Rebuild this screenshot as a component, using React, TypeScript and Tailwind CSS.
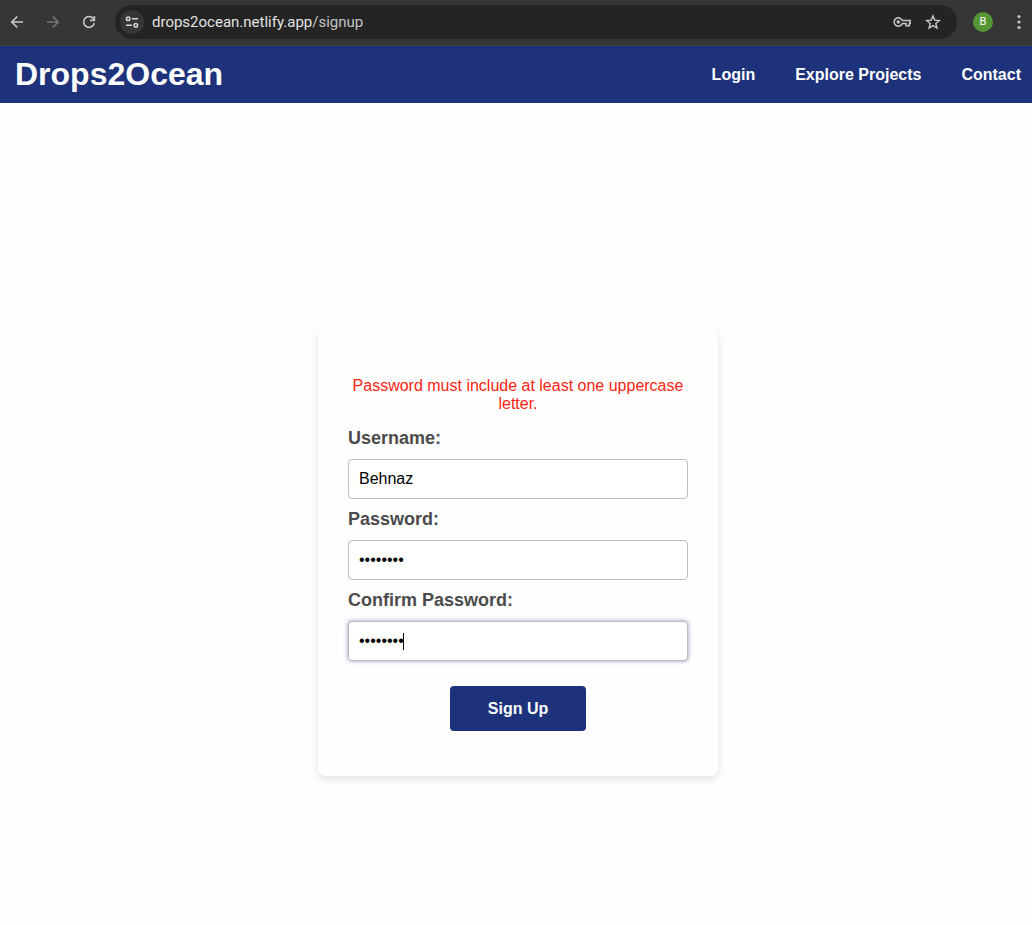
import React, { useState } from "react";

function BrowserBar() {
  return (
    <div className="flex h-[46px] items-center border-b border-[#434343] bg-[#363636] pb-px pl-[7px] pr-[5px] font-['Roboto',sans-serif]">
      <div className="flex flex-none items-center gap-4 text-[#c7c7c7]">
        <button type="button" aria-label="Back" className="flex size-5 items-center justify-center">
          <svg width="14" height="14" viewBox="0 0 14 14" fill="none" stroke="currentColor" strokeWidth="1.6">
            <path d="M13 7H2M7.2 1.6 1.8 7l5.4 5.4" />
          </svg>
        </button>
        <button type="button" aria-label="Forward" disabled className="flex size-5 items-center justify-center text-[#757575]">
          <svg width="14" height="14" viewBox="0 0 14 14" fill="none" stroke="currentColor" strokeWidth="1.6">
            <path d="M1 7h11M6.8 1.6 12.2 7l-5.4 5.4" />
          </svg>
        </button>
        <button type="button" aria-label="Reload" className="flex size-5 items-center justify-center">
          <svg width="14" height="14" viewBox="0 0 14 14" fill="none" stroke="currentColor" strokeWidth="1.6">
            <path d="M12.3 8.2A5.4 5.4 0 1 1 11.3 3.6L12.2 4.8M12.4 1v4.4H8" />
          </svg>
        </button>
      </div>
      <div className="ml-4 flex h-[34px] min-w-0 flex-1 items-center rounded-full bg-[#242424] pl-[5px] pr-4">
        <button type="button" aria-label="Site information" className="flex size-6 flex-none items-center justify-center rounded-full bg-[#363636] text-[#d6d6d6]">
          <svg width="14" height="14" viewBox="0 0 14 14" fill="none" stroke="currentColor" strokeWidth="1.5">
            <circle cx="3.2" cy="3.7" r="1.8" />
            <path d="M7 3.7h6M1 10.3h6" />
            <circle cx="10.8" cy="10.3" r="1.8" />
          </svg>
        </button>
        <span className="ml-2 min-w-0 flex-1 truncate text-[15px] leading-5 text-[#c4c4c4]">
          <span className="text-[#e3e3e3]">drops2ocean.netlify.app</span>/signup
        </span>
        <button type="button" aria-label="Manage passwords" className="flex-none text-[#c7c7c7]">
          <svg width="20" height="14" viewBox="0 0 20 14" fill="none" stroke="currentColor" strokeWidth="1.5">
            <path d="M10.3 5.6A4.2 4.2 0 1 0 10.3 8.4H14V10.8H17.3V8.4H18.2V5.6Z" />
            <circle cx="6.3" cy="7" r="1.7" fill="currentColor" stroke="none" />
          </svg>
        </button>
        <button type="button" aria-label="Bookmark this page" className="ml-[13px] flex-none text-[#c7c7c7]">
          <svg width="16" height="16" viewBox="0 0 16 16" fill="none" stroke="currentColor" strokeWidth="1.4">
            <path d="m8 1.9 1.7 4.2 4.6.4-3.5 3 1.1 4.5L8 11.6 4.1 14l1.1-4.5-3.5-3 4.6-.4Z" />
          </svg>
        </button>
      </div>
      <button type="button" aria-label="Profile" className="ml-4 flex size-5 flex-none items-center justify-center rounded-full bg-[#579636] text-[11px] text-white">
        B
      </button>
      <button type="button" aria-label="Browser menu" className="ml-[18px] flex w-4 flex-none justify-center text-[#c7c7c7]">
        <svg width="4" height="16" viewBox="0 0 4 16" fill="currentColor">
          <circle cx="2" cy="2.5" r="1.6" />
          <circle cx="2" cy="8" r="1.6" />
          <circle cx="2" cy="13.5" r="1.6" />
        </svg>
      </button>
    </div>
  );
}

const labelClass = "block text-[18px] leading-5 font-bold text-[#4b4b4b]";
const inputClass =
  "mt-[11px] mb-2.5 block h-10 w-full rounded border border-[#bdbdbd] bg-white px-2.5 text-base text-black outline-none";

export default function App() {
  const [username, setUsername] = useState("Behnaz");
  const [password, setPassword] = useState("behnaz12");
  const [confirm, setConfirm] = useState("behnaz12");

  return (
    <div className="min-h-screen bg-[#fefefe] font-['Liberation_Sans',Arial,sans-serif]">
      <BrowserBar />
      <header className="flex h-[57px] items-center justify-between bg-[#1d327b] pl-[15px] pr-[11px] text-white">
        <h1 className="pb-0.5 text-[32px] leading-9 font-bold">Drops2Ocean</h1>
        <nav className="flex gap-10 text-base font-bold">
          <a href="#login">Login</a>
          <a href="#projects">Explore Projects</a>
          <a href="#contact">Contact</a>
        </nav>
      </header>
      <main className="flex justify-center pt-56 pb-24 pl-1">
        <form
          className="w-[400px] rounded-lg bg-[#fefefe] px-[30px] pt-[50px] pb-[45px] shadow-[0_4px_8px_rgba(0,0,0,0.1)]"
          onSubmit={(event) => event.preventDefault()}
        >
          <p role="alert" className="mb-[15px] text-center text-base leading-[18px] text-[#fb2410]">
            Password must include at least one uppercase letter.
          </p>
          <label htmlFor="username" className={labelClass}>Username:</label>
          <input id="username" type="text" className={inputClass} value={username} onChange={(e) => setUsername(e.target.value)} />
          <label htmlFor="password" className={labelClass}>Password:</label>
          <input id="password" type="password" className={inputClass} value={password} onChange={(e) => setPassword(e.target.value)} />
          <label htmlFor="confirm" className={labelClass}>Confirm Password:</label>
          <div className="relative">
            <input
              id="confirm"
              type="password"
              className={inputClass + " caret-transparent shadow-[0_0_4px_rgba(29,50,123,0.5)]"}
              value={confirm}
              onChange={(e) => setConfirm(e.target.value)}
            />
            <span aria-hidden="true" className="absolute top-3 left-[55px] h-[17px] w-px bg-black" />
          </div>
          <button type="submit" className="mx-auto mt-[25px] block h-[45px] w-[136px] rounded bg-[#1d327b] text-base font-bold text-white">
            Sign Up
          </button>
        </form>
      </main>
    </div>
  );
}
